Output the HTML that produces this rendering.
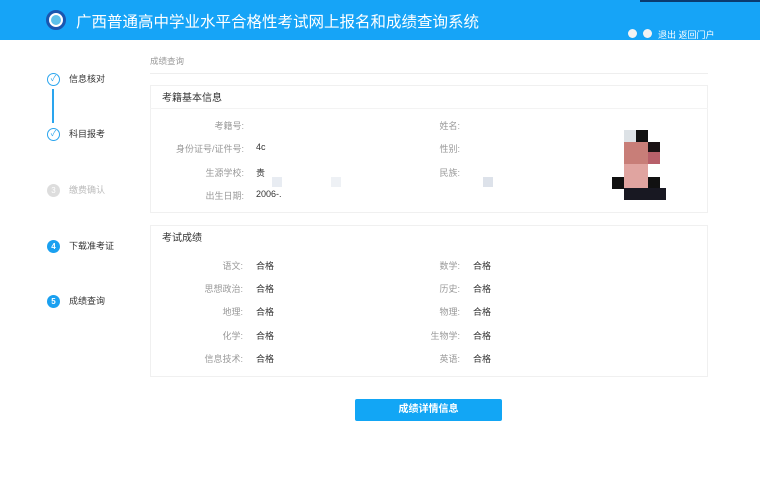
<!DOCTYPE html>
<html><head><meta charset="utf-8"><style>
*{margin:0;padding:0;box-sizing:border-box}
body{width:760px;height:500px;background:#fff;font-family:"Liberation Sans","Noto Sans CJK SC",sans-serif;position:relative;overflow:hidden;font-size:9px;color:#333}
.hdr{position:absolute;left:0;top:0;width:760px;height:40px;background:#16a4f7}
.a{position:absolute;white-space:nowrap}
.lbl{color:#999;text-align:right;width:120px}
.val{color:#333}
.st{position:absolute;left:47px;width:13px;height:13px;border-radius:50%}
.card{position:absolute;left:150px;width:558px;border:1px solid #f0f0f0;background:#fff}
</style></head><body>
<div class="hdr"></div>
<div class="a" style="left:640px;top:0;width:120px;height:2px;background:#0a3a70"></div>
<div class="a" style="left:46px;top:10px;width:20px;height:20px;border-radius:50%;background:#fff;border:3px solid #1a56b0"><div style="margin:2px;width:10px;height:10px;border-radius:50%;background:#5cc0ea"></div></div>
<div class="a" style="left:76px;top:10px;font-size:15.5px;color:#fff">广西普通高中学业水平合格性考试网上报名和成绩查询系统</div>
<div class="a" style="left:628px;top:29px;width:9px;height:9px;border-radius:50%;background:#f3f3f3"></div>
<div class="a" style="left:643px;top:29px;width:9px;height:9px;border-radius:50%;background:#f3f3f3"></div>
<div class="a" style="left:658px;top:28px;color:#fff;font-size:9px">退出 返回门户</div>

<div class="st" style="top:73px;border:1.5px solid #2aa5ee;color:#2aa5ee;font-size:8px;text-align:center;line-height:10px">✓</div>
<div class="a" style="left:52px;top:89px;width:1.5px;height:34px;background:#2aa5ee"></div>
<div class="st" style="top:128px;border:1.5px solid #2aa5ee;color:#2aa5ee;font-size:8px;text-align:center;line-height:10px">✓</div>
<div class="st" style="top:184px;background:#ddd;color:#fff;font-size:8px;text-align:center;line-height:13px">3</div>
<div class="st" style="top:240px;background:#1aa0f0;color:#fff;font-size:8px;text-align:center;line-height:13px;font-weight:bold">4</div>
<div class="st" style="top:295px;background:#1aa0f0;color:#fff;font-size:8px;text-align:center;line-height:13px;font-weight:bold">5</div>
<div class="a" style="left:69px;top:72px">信息核对</div>
<div class="a" style="left:69px;top:127px">科目报考</div>
<div class="a" style="left:69px;top:183px;color:#bbb">缴费确认</div>
<div class="a" style="left:69px;top:239px">下载准考证</div>
<div class="a" style="left:69px;top:294px">成绩查询</div>

<div class="a" style="left:150px;top:55px;color:#999;font-size:8.5px">成绩查询</div>
<div class="a" style="left:150px;top:73px;width:558px;height:1px;background:#eee"></div>

<div class="card" style="top:85px;height:128px"></div>
<div class="a" style="left:162px;top:89px;font-size:10px">考籍基本信息</div>
<div class="a" style="left:150px;top:108px;width:558px;height:1px;background:#f3f3f3"></div>
<div class="a lbl" style="left:124px;top:119px">考籍号:</div>
<div class="a lbl" style="left:124px;top:142px">身份证号/证件号:</div>
<div class="a lbl" style="left:124px;top:166px">生源学校:</div>
<div class="a lbl" style="left:124px;top:189px">出生日期:</div>
<div class="a val" style="left:256px;top:142px">4c</div>
<div class="a val" style="left:256px;top:166px">贵</div>
<div class="a val" style="left:256px;top:189px">2006-.</div>
<div class="a lbl" style="left:340px;top:119px">姓名:</div>
<div class="a lbl" style="left:340px;top:142px">性别:</div>
<div class="a lbl" style="left:340px;top:166px">民族:</div>
<div class="a" style="left:272px;top:177px;width:10px;height:10px;background:#e8ecf2"></div>
<div class="a" style="left:331px;top:177px;width:10px;height:10px;background:#eef1f5"></div>
<div class="a" style="left:483px;top:177px;width:10px;height:10px;background:#dde2ea"></div>
<!-- photo -->
<div class="a" style="left:624px;top:130px;width:12px;height:12px;background:#dde2e6"></div>
<div class="a" style="left:636px;top:130px;width:12px;height:12px;background:#111"></div>
<div class="a" style="left:624px;top:142px;width:24px;height:22px;background:#c87e78"></div>
<div class="a" style="left:648px;top:142px;width:12px;height:22px;background:#1a1214"></div>
<div class="a" style="left:648px;top:152px;width:12px;height:12px;background:#b8606a"></div>
<div class="a" style="left:624px;top:164px;width:24px;height:24px;background:#e0a4a0"></div>
<div class="a" style="left:612px;top:177px;width:12px;height:12px;background:#111"></div>
<div class="a" style="left:648px;top:177px;width:12px;height:12px;background:#111"></div>
<div class="a" style="left:624px;top:188px;width:42px;height:12px;background:#181822"></div>

<div class="card" style="top:225px;height:152px"></div>
<div class="a" style="left:162px;top:229px;font-size:10px">考试成绩</div>
<div class="a lbl" style="left:123px;top:259px">语文:</div><div class="a val" style="left:256px;top:259px">合格</div>
<div class="a lbl" style="left:123px;top:282px">思想政治:</div><div class="a val" style="left:256px;top:282px">合格</div>
<div class="a lbl" style="left:123px;top:305px">地理:</div><div class="a val" style="left:256px;top:305px">合格</div>
<div class="a lbl" style="left:123px;top:329px">化学:</div><div class="a val" style="left:256px;top:329px">合格</div>
<div class="a lbl" style="left:123px;top:352px">信息技术:</div><div class="a val" style="left:256px;top:352px">合格</div>
<div class="a lbl" style="left:340px;top:259px">数学:</div><div class="a val" style="left:473px;top:259px">合格</div>
<div class="a lbl" style="left:340px;top:282px">历史:</div><div class="a val" style="left:473px;top:282px">合格</div>
<div class="a lbl" style="left:340px;top:305px">物理:</div><div class="a val" style="left:473px;top:305px">合格</div>
<div class="a lbl" style="left:340px;top:329px">生物学:</div><div class="a val" style="left:473px;top:329px">合格</div>
<div class="a lbl" style="left:340px;top:352px">英语:</div><div class="a val" style="left:473px;top:352px">合格</div>

<div class="a" style="left:355px;top:399px;width:147px;height:22px;background:#12a6f5;border-radius:2px;color:#fff;font-weight:bold;font-size:10px;text-align:center;line-height:22px">成绩详情信息</div>
</body></html>
